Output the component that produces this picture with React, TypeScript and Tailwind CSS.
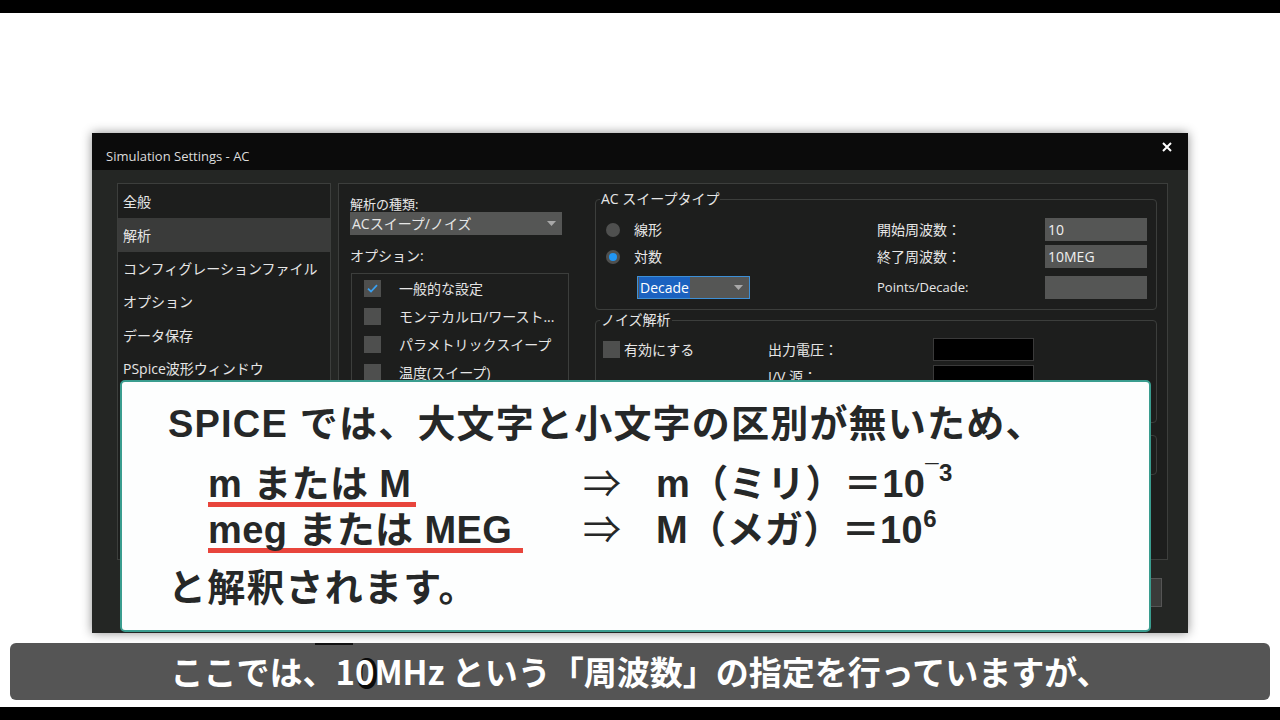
import React from "react";

const navItems = [
  "全般",
  "解析",
  "コンフィグレーションファイル",
  "オプション",
  "データ保存",
  "PSpice波形ウィンドウ",
];

const options = [
  { label: "一般的な設定", checked: true },
  { label: "モンテカルロ/ワースト...", checked: false },
  { label: "パラメトリックスイープ", checked: false },
  { label: "温度(スイープ)", checked: false },
  { label: "感度解析", checked: false },
];

function Caret() {
  return (
    <svg width="9" height="5" viewBox="0 0 9 5" className="shrink-0">
      <path d="M0 0 L9 0 L4.5 5 Z" fill="#a8a8a8" />
    </svg>
  );
}

function Check() {
  return (
    <svg width="11" height="9" viewBox="0 0 11 9">
      <path d="M1 4.6 L4 7.5 L10 1.2" stroke="#3aa0f0" strokeWidth="1.8" fill="none" />
    </svg>
  );
}

function Box({ checked = false }: { checked?: boolean }) {
  return (
    <span className="flex h-[17px] w-[17px] shrink-0 items-center justify-center bg-[#4e4f4e]">
      {checked && <Check />}
    </span>
  );
}

function Radio({ on = false }: { on?: boolean }) {
  return (
    <span className="flex h-[14px] w-[14px] shrink-0 items-center justify-center rounded-full bg-[#4f504f]">
      {on && <span className="h-[8px] w-[8px] rounded-full bg-[#2196f3]" />}
    </span>
  );
}

function Field({ value = "", dark = false }: { value?: string; dark?: boolean }) {
  return (
    <div
      className={
        dark
          ? "flex h-[23px] items-center border border-[#3a3a3a] bg-black px-[3px]"
          : "flex h-[23px] items-center bg-[#555655] px-[3px] text-[#f0f0f0]"
      }
    >
      {value}
    </div>
  );
}

function Underlined({ children, extra }: { children: React.ReactNode; extra: string }) {
  return (
    <div
      className={
        "box-content block h-[35px] w-fit whitespace-nowrap border-b-[5px] border-[#e8453c] leading-[35px] " + extra
      }
    >
      {children}
    </div>
  );
}

export default function App() {
  return (
    <div className="relative h-[720px] w-[1280px] overflow-hidden bg-white">
      <div className="h-[13px] bg-black" />

      <div className="h-[694px] pl-[92px] pt-[120px]">
        {/* dialog */}
        <div className="relative h-[500px] w-[1096px] bg-[#242624] font-['Open_Sans','Noto_Sans_CJK_JP',sans-serif] text-[14px] text-[#e6e6e6] shadow-[0_0_10px_rgba(0,0,0,0.45)]">
          <div className="flex h-[37px] justify-between bg-[#0b0b0b]">
            <div className="pl-[14px] pt-[14px] text-[13px] leading-[18px] text-[#dcdcdc]">Simulation Settings - AC</div>
            <div className="pr-[16px] pt-[9px]">
              <svg width="10" height="10" viewBox="0 0 10 10">
                <path d="M1 1 L9 9 M9 1 L1 9" stroke="#ffffff" strokeWidth="2" />
              </svg>
            </div>
          </div>

          <div className="flex gap-[7px] pl-[25px] pt-[13px]">
            {/* nav */}
            <div className="h-[377px] w-[214px] border border-[#3c3e3c] bg-[#1d1e1d] pt-[1px]">
              {navItems.map((n, i) => (
                <div
                  key={n}
                  className={
                    "flex h-[33.4px] items-center pl-[5px] " + (i === 1 ? "bg-[#3a3b3a]" : "")
                  }
                >
                  {n}
                </div>
              ))}
            </div>

            {/* main panel */}
            <div className="flex h-[377px] w-[830px] border border-[#3c3e3c] bg-[#1d1e1d]">
              <div className="ml-[11px] w-[219px]">
                <div className="mt-[13px] text-[13px] leading-[15px]">解析の種類:</div>
                <div className="flex h-[23px] w-[212px] items-center justify-between bg-[#555655] pl-[2px] pr-[6px]">
                  <span>ACスイープ/ノイズ</span>
                  <Caret />
                </div>
                <div className="mt-[12px] leading-[18px]">オプション:</div>
                <div className="ml-[1px] mt-[8px] h-[240px] w-[218px] border border-[#3c3e3c]">
                  {options.map((o) => (
                    <div key={o.label} className="flex h-[28px] items-center pl-[12px]">
                      <Box checked={o.checked} />
                      <span className="ml-[18px] whitespace-nowrap">{o.label}</span>
                    </div>
                  ))}
                </div>
              </div>

              <div className="ml-[26px] w-[562px]">
                <fieldset className="mt-[5px] h-[121px] rounded-[4px] border border-[#3c3e3c]">
                  <legend className="ml-[4px] px-[1px] leading-[20px]">AC スイープタイプ</legend>
                  <div className="grid grid-cols-[281px_168px_102px] pt-[9px]">
                    <div className="flex h-[23px] items-center pl-[10px]">
                      <Radio />
                      <span className="ml-[14px]">線形</span>
                    </div>
                    <div className="flex h-[23px] items-center">開始周波数：</div>
                    <Field value="10" />

                    <div className="mt-[4px] flex h-[23px] items-center pl-[10px]">
                      <Radio on />
                      <span className="ml-[14px]">対数</span>
                    </div>
                    <div className="mt-[4px] flex h-[23px] items-center">終了周波数：</div>
                    <div className="mt-[4px]">
                      <Field value="10MEG" />
                    </div>

                    <div className="mt-[8px] pl-[41px]">
                      <div className="flex h-[23px] w-[113px] items-center justify-between border border-[#3d8fd6] bg-[#555655] pl-[1px] pr-[6px]">
                        <span className="bg-[#1b62c0] px-[1px] text-white">Decade</span>
                        <Caret />
                      </div>
                    </div>
                    <div className="mt-[8px] flex h-[23px] items-center text-[13px]">Points/Decade:</div>
                    <div className="mt-[8px]">
                      <Field />
                    </div>
                  </div>
                </fieldset>

                <fieldset className="h-[113px] rounded-[4px] border border-[#3c3e3c]">
                  <legend className="ml-[4px] px-[1px] leading-[20px]">ノイズ解析</legend>
                  <div className="grid grid-cols-[172px_165px_101px] pt-[8px]">
                    <div className="flex h-[23px] items-center pl-[7px]">
                      <Box />
                      <span className="ml-[4px]">有効にする</span>
                    </div>
                    <div className="flex h-[23px] items-center">出力電圧：</div>
                    <Field dark />
                    <div className="mt-[4px]" />
                    <div className="mt-[4px] flex h-[23px] items-center">I/V 源：</div>
                    <div className="mt-[4px]">
                      <Field dark />
                    </div>
                  </div>
                </fieldset>

                <fieldset className="mt-[2px] h-[50px] rounded-[4px] border border-[#3c3e3c]">
                  <legend className="ml-[4px] px-[1px] leading-[20px]">出力ファイル オプション</legend>
                </fieldset>
              </div>
            </div>
          </div>

          <div className="mt-[18px] flex justify-end gap-[8px] pr-[26px]">
            {["OK", "キャンセル", "適用"].map((b) => (
              <div
                key={b}
                className="flex h-[29px] w-[84px] items-center justify-center border border-[#555] bg-[#3a3b3a]"
              >
                {b}
              </div>
            ))}
          </div>

          {/* explanation overlay */}
          <div className="absolute left-[28px] top-[247px] h-[252px] w-[1031px] rounded-[5px] border-2 border-[#3a9d8f] bg-[#fdfefe] font-['Liberation_Sans','Noto_Sans_CJK_JP',sans-serif] font-bold text-[#262828]">
            <div className="pl-[46px] pt-[19px] text-[38px] tracking-[0.4px]">
              <div className="h-[46px] whitespace-nowrap leading-[46px] tracking-[1.2px]">
                SPICE では、大文字と小文字の区別が無いため、
              </div>
              <div className="ml-[40px] mt-[20px] flex h-[46px] items-start leading-[35px]">
                <div className="w-[375px]">
                  <Underlined extra="pr-[5px]">m または M</Underlined>
                </div>
                <div className="h-[35px] w-[73px] font-normal">⇒</div>
                <div className="h-[35px] whitespace-nowrap">
                  m（ミリ）＝10<span className="relative -top-[16px] text-[24px]">¯3</span>
                </div>
              </div>
              <div className="ml-[40px] flex h-[46px] items-start leading-[35px]">
                <div className="w-[375px]">
                  <Underlined extra="pr-[11px]">meg または MEG</Underlined>
                </div>
                <div className="h-[35px] w-[73px] font-normal">⇒</div>
                <div className="h-[35px] whitespace-nowrap">
                  M（メガ）＝10<span className="relative -top-[16px] text-[24px]">6</span>
                </div>
              </div>
              <div className="mt-[6px] h-[46px] leading-[46px] tracking-[1.2px]">と解釈されます。</div>
            </div>
          </div>
        </div>
      </div>

      <div className="h-[13px] bg-black" />

      {/* caption */}
      <div className="absolute left-[10px] top-[643px] flex h-[57px] w-[1260px] items-center justify-center rounded-[6px] bg-[#555555] font-['Noto_Sans_CJK_JP',sans-serif] text-[33px] font-bold text-white">
        <span className="absolute left-[305px] top-0 h-[2px] w-[38px] bg-[#111]" />
        <span className="absolute left-[345px] top-[3px] text-[40px] leading-[50px] text-[#0a0a0a]">0</span>
        <span className="relative">ここでは、10MHz という「周波数」の指定を行っていますが、</span>
      </div>
    </div>
  );
}
